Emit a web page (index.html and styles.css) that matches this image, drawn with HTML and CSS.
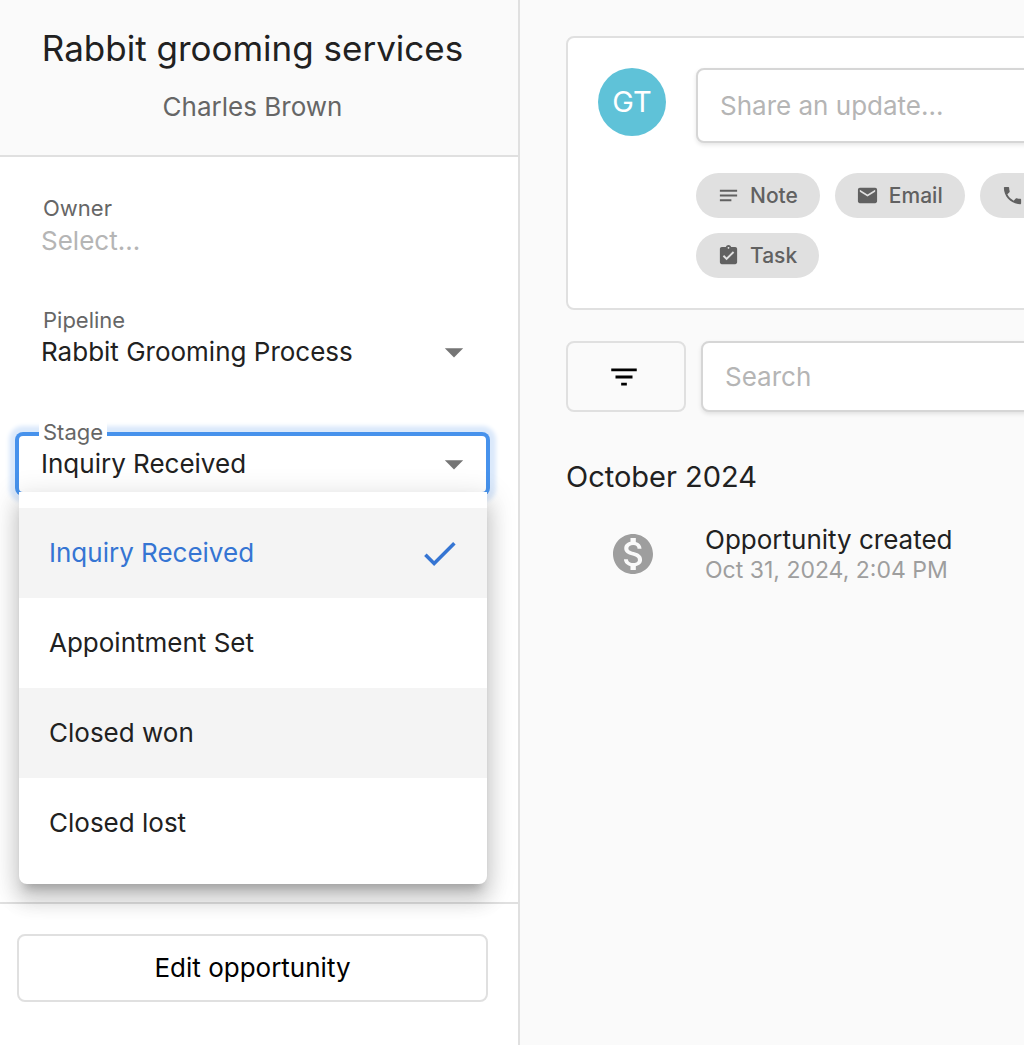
FILE: index.html
```html
<!DOCTYPE html>
<html lang="en">
<head>
<meta charset="utf-8">
<meta name="viewport" content="width=device-width, initial-scale=1">
<title>Rabbit grooming services</title>
<link rel="stylesheet" href="styles.css">
</head>
<body>
<div class="layout">
  <aside class="sidebar">
    <header class="sidebar-header">
      <h1 class="title">Rabbit grooming services</h1>
      <p class="contact">Charles Brown</p>
    </header>
    <form class="fields">
      <div class="field">
        <label class="field-label" for="owner">Owner</label>
        <input class="field-control" id="owner" type="text" placeholder="Select...">
      </div>
      <div class="field">
        <label class="field-label" for="pipeline">Pipeline</label>
        <select class="field-control" id="pipeline">
          <option>Rabbit Grooming Process</option>
        </select>
        <svg class="field-arrow" viewBox="0 0 24 24" aria-hidden="true"><path d="M7 10l5 5 5-5z"/></svg>
      </div>
      <div class="field">
        <label class="field-label" for="stage">Stage</label>
        <select class="field-control field-control-open" id="stage">
          <option selected>Inquiry Received</option>
          <option>Appointment Set</option>
          <option>Closed won</option>
          <option>Closed lost</option>
        </select>
        <svg class="field-arrow" viewBox="0 0 24 24" aria-hidden="true"><path d="M7 10l5 5 5-5z"/></svg>
        <ul class="menu" role="listbox" aria-label="Stage">
          <li class="menu-item menu-item-selected" role="option" aria-selected="true">Inquiry Received
            <svg class="menu-check" viewBox="0 0 24 24" aria-hidden="true"><path d="M9 16.17L4.83 12l-1.42 1.41L9 19 21 7l-1.41-1.41z"/></svg>
          </li>
          <li class="menu-item" role="option" aria-selected="false">Appointment Set</li>
          <li class="menu-item menu-item-hover" role="option" aria-selected="false">Closed won</li>
          <li class="menu-item" role="option" aria-selected="false">Closed lost</li>
        </ul>
      </div>
    </form>
    <footer class="sidebar-footer">
      <button class="edit-button" type="button">Edit opportunity</button>
    </footer>
  </aside>

  <main class="feed">
    <section class="composer">
      <div class="avatar">GT</div>
      <div class="composer-body">
        <input class="text-input composer-input" type="text" placeholder="Share an update..." aria-label="Share an update">
        <div class="chips">
          <button class="chip" type="button">
            <svg class="chip-icon" viewBox="0 0 24 24" aria-hidden="true"><path d="M3 18h12v-2H3v2zM3 6v2h18V6H3zm0 7h18v-2H3v2z"/></svg>Note</button>
          <button class="chip" type="button">
            <svg class="chip-icon" viewBox="0 0 24 24" aria-hidden="true"><path d="M20 4H4c-1.100 0-1.990.9-1.990 2L2 18c0 1.100.9 2 2 2h16c1.100 0 2-.9 2-2V6c0-1.100-.9-2-2-2zm0 4l-8 5-8-5V6l8 5 8-5v2z"/></svg>Email</button>
          <button class="chip" type="button">
            <svg class="chip-icon" viewBox="0 0 24 24" aria-hidden="true"><path d="M6.620 10.790c1.440 2.830 3.760 5.140 6.590 6.590l2.200-2.200c.27-.27.67-.36 1.020-.24 1.120.37 2.330.57 3.570.57.55 0 1 .45 1 1V20c0 .55-.45 1-1 1-9.390 0-17-7.610-17-17 0-.55.45-1 1-1h3.500c.55 0 1 .45 1 1 0 1.250.2 2.450.57 3.570.11.35.03.74-.25 1.020l-2.200 2.200z"/></svg>Call</button>
          <button class="chip" type="button">
            <svg class="chip-icon" viewBox="0 0 24 24" aria-hidden="true"><path d="M19 3h-4.180C14.400 1.840 13.300 1 12 1c-1.300 0-2.400.84-2.820 2H5c-1.100 0-2 .9-2 2v14c0 1.100.9 2 2 2h14c1.100 0 2-.9 2-2V5c0-1.100-.9-2-2-2zm-7 0c.55 0 1 .45 1 1s-.45 1-1 1-1-.45-1-1 .45-1 1-1zm-2 14l-4-4 1.410-1.410L10 14.170l6.590-6.590L18 9l-8 8z"/></svg>Task</button>
        </div>
      </div>
    </section>

    <div class="toolbar">
      <button class="filter-button" type="button" aria-label="Filter">
        <svg class="filter-icon" viewBox="0 0 24 24" aria-hidden="true"><path d="M10 18h4v-2h-4v2zM3 6v2h18V6H3zm3 7h12v-2H6v2z"/></svg>
      </button>
      <input class="text-input search-input" type="search" placeholder="Search" aria-label="Search">
    </div>

    <h2 class="month">October 2024</h2>
    <article class="event">
      <svg class="event-icon" viewBox="0 0 24 24" aria-hidden="true"><path d="M12 2C6.480 2 2 6.480 2 12s4.480 10 10 10 10-4.480 10-10S17.520 2 12 2zm1.410 16.090V20h-2.670v-1.930c-1.710-.36-3.160-1.460-3.270-3.400h1.960c.1 1.050.82 1.870 2.650 1.870 1.960 0 2.400-.98 2.400-1.590 0-.83-.44-1.610-2.670-2.140-2.480-.6-4.180-1.620-4.180-3.670 0-1.720 1.390-2.840 3.110-3.210V4h2.670v1.950c1.860.45 2.790 1.860 2.850 3.390H14.300c-.05-1.110-.64-1.870-2.220-1.870-1.500 0-2.400.68-2.400 1.640 0 .84.65 1.390 2.670 1.910s4.180 1.390 4.180 3.910c-.01 1.830-1.380 2.830-3.120 3.160z"/></svg>
      <div class="event-text">
        <h3 class="event-title">Opportunity created</h3>
        <time class="event-time" datetime="2024-10-31T14:04">Oct 31, 2024, 2:04 PM</time>
      </div>
    </article>
  </main>
</div>
</body>
</html>
```
FILE: styles.css
```css
* {
  box-sizing: border-box;
}

body {
  margin: 0;
  background: #fafafa;
  color: #212121;
  font-family: Inter, "Liberation Sans", sans-serif;
  font-size: 26px;
  line-height: 32px;
}

h1, h2, h3, p, ul {
  margin: 0;
  padding: 0;
  font-weight: 400;
}

button, input, select {
  margin: 0;
  font: inherit;
}

svg {
  fill: currentColor;
  flex: none;
}

.layout {
  display: flex;
  min-height: 100vh;
  overflow: hidden;
}

/* Sidebar */
.sidebar {
  flex: 0 0 520px;
  display: flex;
  flex-direction: column;
  background: #fff;
  border-right: 2px solid #e0e0e0;
}

.sidebar-header {
  padding: 24px 30px 32px 17px;
  background: #fafafa;
  border-bottom: 2px solid #e0e0e0;
  text-align: center;
}

.title {
  font-size: 35px;
  line-height: 48px;
}

.contact {
  margin-top: 19px;
  color: #666;
}

.fields {
  flex: 1;
  display: flex;
  flex-direction: column;
  gap: 52px;
  padding: 53px 30px 52px 17px;
}

.field {
  position: relative;
}

.field-label {
  position: absolute;
  top: -16px;
  left: 22px;
  padding: 0 4px;
  background: #fff;
  color: #666;
  font-size: 22px;
  line-height: 28px;
}

.field-control {
  display: block;
  width: 100%;
  height: 60px;
  padding: 0 48px 0 22px;
  border: 2px solid transparent;
  border-radius: 6px;
  background: #fff;
  color: #212121;
  appearance: none;
  outline: 0;
}

.field-control-open {
  border-color: #4792ec;
  box-shadow: 0 0 0 2px #4792ec, 0 0 4px 8px #dbe9fb;
}

.field-arrow {
  position: absolute;
  top: 8px;
  right: 12px;
  width: 44px;
  height: 44px;
  color: #757575;
  pointer-events: none;
}

::placeholder {
  color: #b5b5b5;
  opacity: 1;
}

.menu {
  position: absolute;
  z-index: 2;
  top: 58px;
  left: 2px;
  right: 1px;
  padding: 16px 0;
  border-radius: 0 0 8px 8px;
  background: #fff;
  box-shadow: 0 10px 10px -6px rgba(0, 0, 0, .2), 0 16px 20px 2px rgba(0, 0, 0, .14), 0 6px 28px 4px rgba(0, 0, 0, .12);
  list-style: none;
}

.menu-item {
  display: flex;
  align-items: center;
  justify-content: space-between;
  height: 90px;
  padding: 0 26px 0 30px;
}

.menu-item-selected,
.menu-item-hover {
  background: #f4f4f4;
}

.menu-item-selected {
  color: #3575d3;
}

.menu-check {
  width: 43px;
  height: 43px;
}

.sidebar-footer {
  padding: 30px 30px 43px 17px;
  border-top: 2px solid #e0e0e0;
}

.edit-button {
  width: 100%;
  height: 68px;
  border: 2px solid #e0e0e0;
  border-radius: 8px;
  background: #fff;
  color: #000;
}

/* Activity feed */
.feed {
  flex: 1 0 700px;
  padding: 36px 46px;
}

.composer {
  display: flex;
  align-items: flex-start;
  gap: 30px;
  padding: 30px;
  border: 2px solid #e0e0e0;
  border-radius: 8px;
  background: #fff;
}

.avatar {
  flex: none;
  width: 68px;
  height: 68px;
  border-radius: 50%;
  background: #5fc2d8;
  color: #fff;
  font-size: 29px;
  line-height: 68px;
  text-align: center;
}

.composer-body {
  flex: 1;
}

.text-input {
  display: block;
  padding: 0 22px;
  border: 2px solid #d6d6d6;
  border-radius: 8px;
  background: #fff;
  color: #212121;
  box-shadow: 0 2px 4px rgba(0, 0, 0, .1);
  appearance: none;
  outline: 0;
}

.composer-input {
  width: 100%;
  height: 75px;
}

.chips {
  display: flex;
  flex-wrap: wrap;
  gap: 15px;
  margin-top: 30px;
}

.chip {
  display: flex;
  align-items: center;
  gap: 10px;
  height: 45px;
  padding: 0 22px 0 21px;
  border: 0;
  border-radius: 23px;
  background: #e0e0e0;
  color: #616161;
  font-size: 21px;
  font-weight: 500;
}

.chip-icon {
  width: 23px;
  height: 23px;
}

.toolbar {
  display: flex;
  gap: 15px;
  margin-top: 31px;
}

.filter-button {
  display: flex;
  align-items: center;
  justify-content: center;
  width: 120px;
  height: 71px;
  padding: 0 4px 0 0;
  border: 2px solid #e0e0e0;
  border-radius: 8px;
  background: #fafafa;
  color: #000;
}

.filter-icon {
  width: 34px;
  height: 34px;
}

.search-input {
  flex: 1;
  height: 71px;
}

.month {
  margin-top: 45px;
  font-size: 29px;
  line-height: 40px;
}

.event {
  display: flex;
  align-items: center;
  gap: 48px;
  margin-top: 27px;
  padding-left: 43px;
}

.event-icon {
  width: 48px;
  height: 48px;
  color: #9e9e9e;
}

.event-title {
  font-size: 26px;
  line-height: 32px;
}

.event-time {
  display: block;
  color: #9e9e9e;
  font-size: 23px;
  line-height: 28px;
}
```
